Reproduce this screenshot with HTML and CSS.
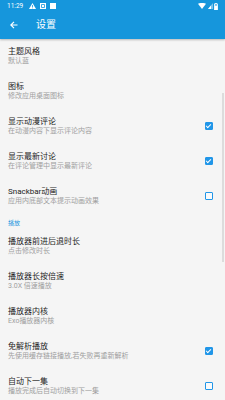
FILE: index.html
```html
<!DOCTYPE html>
<html lang="zh">
<head>
<meta charset="utf-8">
<link rel="stylesheet" href="styles.css">
</head>
<body>
<div class="app">
  <header class="header">
    <div class="status">
      <div class="status-left">
        <span class="time">11:29</span>
        <svg class="si" width="7" height="6" viewBox="0 0 7 6"><path d="M3.5 0 L7 6 H0 Z" fill="#fff"/><rect x="3.1" y="2" width="0.8" height="2" fill="#1696dc"/><rect x="3.1" y="4.5" width="0.8" height="0.8" fill="#1696dc"/></svg>
        <svg class="si" width="6" height="6" viewBox="0 0 6 6"><rect x="0.6" y="0.6" width="4.8" height="4.8" fill="none" stroke="#fff" stroke-width="1.2"/><rect x="2" y="2" width="2" height="2" fill="#fff"/></svg>
        <span class="sq"></span>
      </div>
      <div class="status-right">
        <svg width="8" height="6" viewBox="0 0 8 6"><path d="M0 0.8 Q4 -1 8 0.8 L4 6 Z" fill="#fff"/></svg>
        <svg width="5" height="6" viewBox="0 0 5 6"><path d="M5 0 V6 H0 Z" fill="#fff" opacity="0.45"/><path d="M3 2.4 V6 H0 Z" fill="#fff"/></svg>
        <svg width="4" height="7" viewBox="0 0 4 7"><rect x="1.2" y="0" width="1.6" height="1" fill="#fff"/><rect x="0.5" y="1" width="3" height="6" fill="none" stroke="#fff" stroke-width="0.8"/><rect x="0.5" y="2.5" width="3" height="4.5" fill="#fff"/></svg>
      </div>
    </div>
    <div class="toolbar">
      <svg class="back" width="8" height="8" viewBox="0 0 8 8"><path d="M7.5 4 H1 M4 0.8 L0.8 4 L4 7.2" fill="none" stroke="#fff" stroke-width="1.2"/></svg>
      <span class="title">设置</span>
    </div>
  </header>
  <main class="list">
    <div class="item"><div class="text"><div class="t">主题风格</div><div class="s">默认蓝</div></div></div>
    <div class="item"><div class="text"><div class="t">图标</div><div class="s">修改应用桌面图标</div></div></div>
    <div class="item"><div class="text"><div class="t">显示动漫评论</div><div class="s">在动漫内容下显示评论内容</div></div><span class="cb on"></span></div>
    <div class="item"><div class="text"><div class="t">显示最新讨论</div><div class="s">在评论管理中显示最新评论</div></div><span class="cb on"></span></div>
    <div class="item"><div class="text"><div class="t">Snackbar动画</div><div class="s">应用内底部文本提示动画效果</div></div><span class="cb"></span></div>
    <div class="cat">播放</div>
    <div class="item"><div class="text"><div class="t">播放器前进后退时长</div><div class="s">点击修改时长</div></div></div>
    <div class="item"><div class="text"><div class="t">播放器长按倍速</div><div class="s">3.0X 倍速播放</div></div></div>
    <div class="item"><div class="text"><div class="t">播放器内核</div><div class="s">Exo播放器内核</div></div></div>
    <div class="item"><div class="text"><div class="t">免解析播放</div><div class="s">先使用缓存链接播放,若失败再重新解析</div></div><span class="cb on"></span></div>
    <div class="item"><div class="text"><div class="t">自动下一集</div><div class="s">播放完成后自动切换到下一集</div></div><span class="cb"></span></div>
  </main>
  <div class="scrollbar"></div>
</div>
</body>
</html>
```
FILE: styles.css
```css
* { box-sizing: border-box; }
html, body { margin: 0; padding: 0; }
body {
  width: 225px;
  height: 400px;
  overflow: hidden;
  background: #f5f5f5;
  font-family: Roboto, "Noto Sans CJK SC", sans-serif;
}
.app { position: relative; height: 400px; overflow: hidden; }
.header {
  background: #1696dc;
  color: #fff;
  height: 39px;
  box-shadow: 0 1px 2px rgba(0,0,0,0.25);
  position: relative;
  z-index: 1;
}
.status {
  height: 12px;
  display: flex;
  align-items: center;
  justify-content: space-between;
  padding: 0 7px 0 7px;
}
.status-left { display: flex; align-items: center; gap: 4px; }
.time { font-size: 6.5px; line-height: 8px; color: #fff; margin-right: 2px; }
.si { display: block; }
.sq { width: 6px; height: 6px; background: #fff; display: block; }
.status-right { display: flex; align-items: center; gap: 1.5px; }
.status-right svg { display: block; }
.toolbar {
  height: 27px;
  display: flex;
  align-items: center;
  padding-left: 10px;
  padding-bottom: 1px;
}
.back { display: block; }
.title { font-size: 10px; line-height: 12px; margin-left: 18px; }
.list { display: flex; flex-direction: column; }
.item {
  height: 35px;
  display: flex;
  align-items: center;
  padding: 0 12px 0 8px;
}
.text { flex: 1; }
.t { font-size: 8px; line-height: 10px; color: #1e1e1e; }
.s { font-size: 7px; line-height: 9px; color: #a0a0a0; }
.cb {
  width: 8px;
  height: 8px;
  border: 1.3px solid #2196e8;
  border-radius: 1px;
  background: #fafafa;
  position: relative;
  margin-bottom: 2px;
}
.cb.on { background: #2196e8; }
.cb.on::after {
  content: "";
  position: absolute;
  left: 1.2px;
  top: 0.2px;
  width: 2.2px;
  height: 3.8px;
  border: solid #fff;
  border-width: 0 1.1px 1.1px 0;
  transform: rotate(45deg);
}
.cat {
  height: 15px;
  padding: 5px 8px 0;
  font-size: 6px;
  line-height: 8px;
  color: #1e96e0;
}
.scrollbar {
  position: absolute;
  right: 1px;
  top: 93px;
  width: 2px;
  height: 169px;
  background: #dcdcdc;
}
```
